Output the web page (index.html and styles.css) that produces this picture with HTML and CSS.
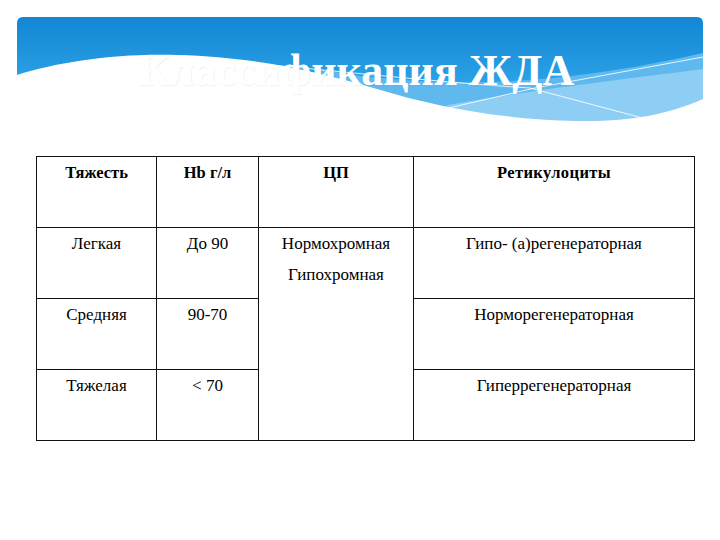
FILE: index.html
```html
<!DOCTYPE html>
<html lang="ru">
<head>
<meta charset="utf-8">
<title>Классификация ЖДА</title>
<link rel="stylesheet" href="styles.css">
</head>
<body>
<div class="slide">
  <header class="banner">
    <svg class="banner-bg" viewBox="0 0 686 108" preserveAspectRatio="none" aria-hidden="true">
      <defs>
        <linearGradient id="sky" x1="0" y1="0" x2="0" y2="1">
          <stop offset="0" stop-color="#1286d3"/>
          <stop offset="0.6" stop-color="#2ba1e6"/>
          <stop offset="1" stop-color="#3eaeee"/>
        </linearGradient>
      </defs>
      <path d="M6,0 H680 Q686,0 686,6 V108 H0 V6 Q0,0 6,0 Z" fill="url(#sky)"/>
      <path d="M300,52 C400,70 520,74 686,36 L686,108 L300,108 Z" fill="#5fb8ee"/>
      <path d="M430,88 C520,72 610,62 686,52 L686,108 L430,108 Z" fill="#8ecdf4"/>
      <path d="M0,58 C40,45 100,36 160,38 C240,40 300,55 360,72 C420,90 480,102 560,104 C610,105 650,98 686,82 L686,108 L0,108 Z" fill="#ffffff"/>
      <path d="M223,45 C330,55 430,66 513,71 L633,103" fill="none" stroke="#ffffff" stroke-width="1" opacity="0.85"/>
      <path d="M423,93 L518,71 L686,40" fill="none" stroke="#ffffff" stroke-width="1" opacity="0.85"/>
    </svg>
    <h1 class="title">Классификация ЖДА</h1>
  </header>

  <table class="grid">
    <colgroup>
      <col class="c1"><col class="c2"><col class="c3"><col class="c4">
    </colgroup>
    <tr class="head">
      <th>Тяжесть</th>
      <th>Hb г/л</th>
      <th>ЦП</th>
      <th class="spaced">Ретикулоциты</th>
    </tr>
    <tr>
      <td>Легкая</td>
      <td>До 90</td>
      <td rowspan="3" class="cp"><div class="line">Нормохромная</div><div class="line">Гипохромная</div></td>
      <td>Гипо- (а)регенераторная</td>
    </tr>
    <tr>
      <td>Средняя</td>
      <td>90-70</td>
      <td>Норморегенераторная</td>
    </tr>
    <tr>
      <td>Тяжелая</td>
      <td>&lt; 70</td>
      <td>Гиперрегенераторная</td>
    </tr>
  </table>
</div>
</body>
</html>
```

FILE: styles.css
```css
html, body {
  margin: 0;
  padding: 0;
  background: #ffffff;
}

.slide {
  width: 720px;
  height: 540px;
  padding-top: 17px;
  box-sizing: border-box;
  font-family: "Liberation Serif", "Times New Roman", serif;
  color: #000;
}

.banner {
  position: relative;
  margin: 0 17px;
  height: 108px;
}

.banner-bg {
  position: absolute;
  left: 0;
  top: 0;
  width: 686px;
  height: 108px;
  display: block;
}

.title {
  position: relative;
  margin: 0;
  padding-top: 32px;
  padding-right: 8px;
  text-align: center;
  font-family: "Liberation Serif", "Times New Roman", serif;
  font-size: 44px;
  line-height: 44px;
  font-weight: bold;
  color: #ffffff;
  text-shadow: 1px 1px 1px rgba(120, 160, 190, 0.12);
}

.grid {
  margin: 31px 0 0 36px;
  width: 658px;
  border-collapse: collapse;
  table-layout: fixed;
}

.c1 { width: 120px; }
.c2 { width: 102px; }
.c3 { width: 155px; }
.c4 { width: 281px; }

.grid th,
.grid td {
  border: 1.5px solid #111;
  height: 71px;
  box-sizing: border-box;
  vertical-align: top;
  text-align: center;
  padding: 6px 4px 0;
  font-family: "Liberation Serif", "Times New Roman", serif;
  font-size: 17px;
  line-height: 19px;
  color: #000;
}

.grid th {
  font-size: 16.5px;
  font-weight: bold;
  padding-top: 6px;
}

.grid th.spaced {
  letter-spacing: 0.4px;
}

.cp .line + .line {
  margin-top: 12px;
}
```
